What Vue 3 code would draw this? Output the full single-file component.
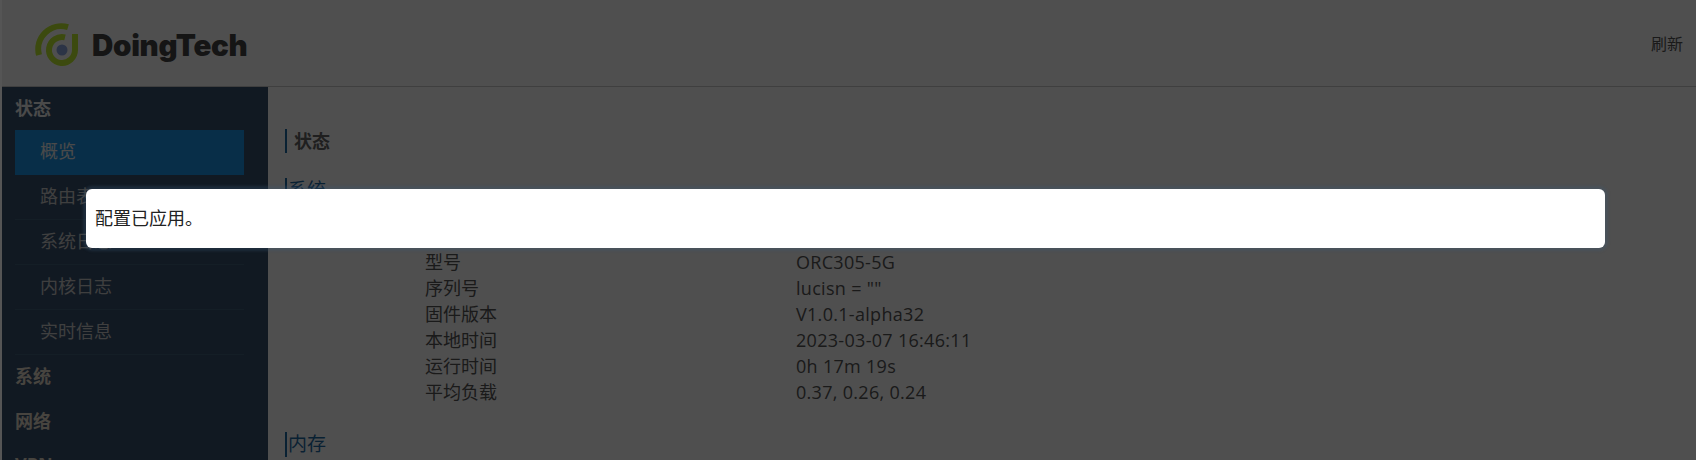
<script setup>
const rows = [
  ['型号', 'ORC305-5G'],
  ['序列号', 'lucisn = ""'],
  ['固件版本', 'V1.0.1-alpha32'],
  ['本地时间', '2023-03-07 16:46:11'],
  ['运行时间', '0h 17m 19s'],
  ['平均负载', '0.37, 0.26, 0.24'],
]
const items = ['概览', '路由表', '系统日志', '内核日志', '实时信息']
const groups = ['系统', '网络', 'VPN']
</script>

<template>
  <div class="page">
    <header class="top">
      <div class="brand">
        <svg class="logo" width="44" height="46" viewBox="0 0 44 46" fill="none">
          <path d="M33 5.2 A23 23 0 0 0 4 33" stroke="#c0ee30" stroke-width="6" />
          <path d="M30 15.3 A13 13 0 1 0 40 28 V12" stroke="#c0ee30" stroke-width="6" />
          <circle cx="27" cy="28" r="5.5" fill="#8ea8e0" />
        </svg>
        <span class="name">DoingTech</span>
      </div>
      <a class="refresh">刷新</a>
    </header>
    <div class="body">
      <aside class="side">
        <div class="group">状态</div>
        <ul class="menu">
          <li v-for="(it, i) in items" :key="it" :class="{ on: i === 0 }">{{ it }}</li>
        </ul>
        <div v-for="g in groups" :key="g" class="group next">{{ g }}</div>
      </aside>
      <main class="main">
        <h2 class="title">状态</h2>
        <h3 class="section">系统</h3>
        <div class="table">
          <div v-for="r in rows" :key="r[0]" class="row">
            <span class="key">{{ r[0] }}</span>
            <span class="val">{{ r[1] }}</span>
          </div>
        </div>
        <h3 class="section mem">内存</h3>
      </main>
    </div>
    <div class="overlay">
      <div class="modal">配置已应用。</div>
    </div>
  </div>
</template>

<style>
html, body { margin: 0; height: 100%; overflow: hidden; background: #fff; }
</style>

<style scoped>
.page {
  position: relative;
  height: 460px;
  overflow: hidden;
  box-sizing: border-box;
  border-left: 2px solid #555;
  background: #fff;
  font-family: "Open Sans", "Noto Sans CJK SC", sans-serif;
  font-size: 18px;
  color: #555;
}
.top {
  height: 86px;
  border-bottom: 1px solid #ccc;
  display: flex;
  align-items: center;
  justify-content: space-between;
  padding: 0 13px 0 33px;
}
.brand { display: flex; align-items: center; gap: 13px; margin-top: 4px; }
.logo { display: block; }
.name {
  font-family: Inter, "Liberation Sans", sans-serif;
  font-weight: 900;
  font-size: 29.5px;
  letter-spacing: -0.3px;
  color: #444;
}
.refresh { font-size: 16px; color: #555; }
.body { display: flex; height: 373px; }
.side {
  width: 266px;
  flex: none;
  background: #38526f;
  padding: 7px 24px 0 13px;
  box-sizing: border-box;
  color: #fff;
}
.group {
  height: 28px;
  line-height: 28px;
  font-weight: 700;
  color: #eee;
}
.group.next { height: 45px; line-height: 43px; color: #e4dccc; }
.group.next:last-child { margin-top: -2px; }
.menu { list-style: none; margin: 0; padding: 0; }
.menu li {
  height: 45px;
  line-height: 43px;
  padding-left: 25px;
  color: #ccc;
  border-bottom: 1px solid #42607c;
  box-sizing: border-box;
}
.menu li.on { background: #1a96e8; color: #eee; border-bottom: 0; margin-top: 8px; }
.main { flex: 1; padding: 42px 15px 0 17px; min-width: 0; }
.title {
  margin: 0;
  font-size: 18px;
  line-height: 24px;
  font-weight: 700;
  border-left: 2px solid #1f6aa5;
  padding-left: 7px;
  color: #666;
}
.section {
  margin: 25px 0 0;
  font-size: 19px;
  line-height: 25px;
  font-weight: 400;
  border-left: 2px solid #1f6aa5;
  padding-left: 1px;
  color: #1f6aa5;
}
.table { margin-top: 46px; padding-left: 140px; }
.row { display: flex; height: 26px; line-height: 26px; }
.key { width: 371px; flex: none; }
.val { letter-spacing: 0.3px; }
.mem { margin-top: 27px; }
.overlay {
  position: absolute;
  inset: 0 0 0 -2px;
  background: rgba(0, 0, 0, 0.69);
}
.modal {
  position: absolute;
  left: 86px;
  top: 189px;
  width: 1519px;
  height: 59px;
  box-sizing: border-box;
  padding: 0 9px;
  line-height: 59px;
  background: #fff;
  border-radius: 6px;
  box-shadow: 0 0 3px 3px rgba(60, 90, 120, 0.3);
  color: #222;
}
</style>
